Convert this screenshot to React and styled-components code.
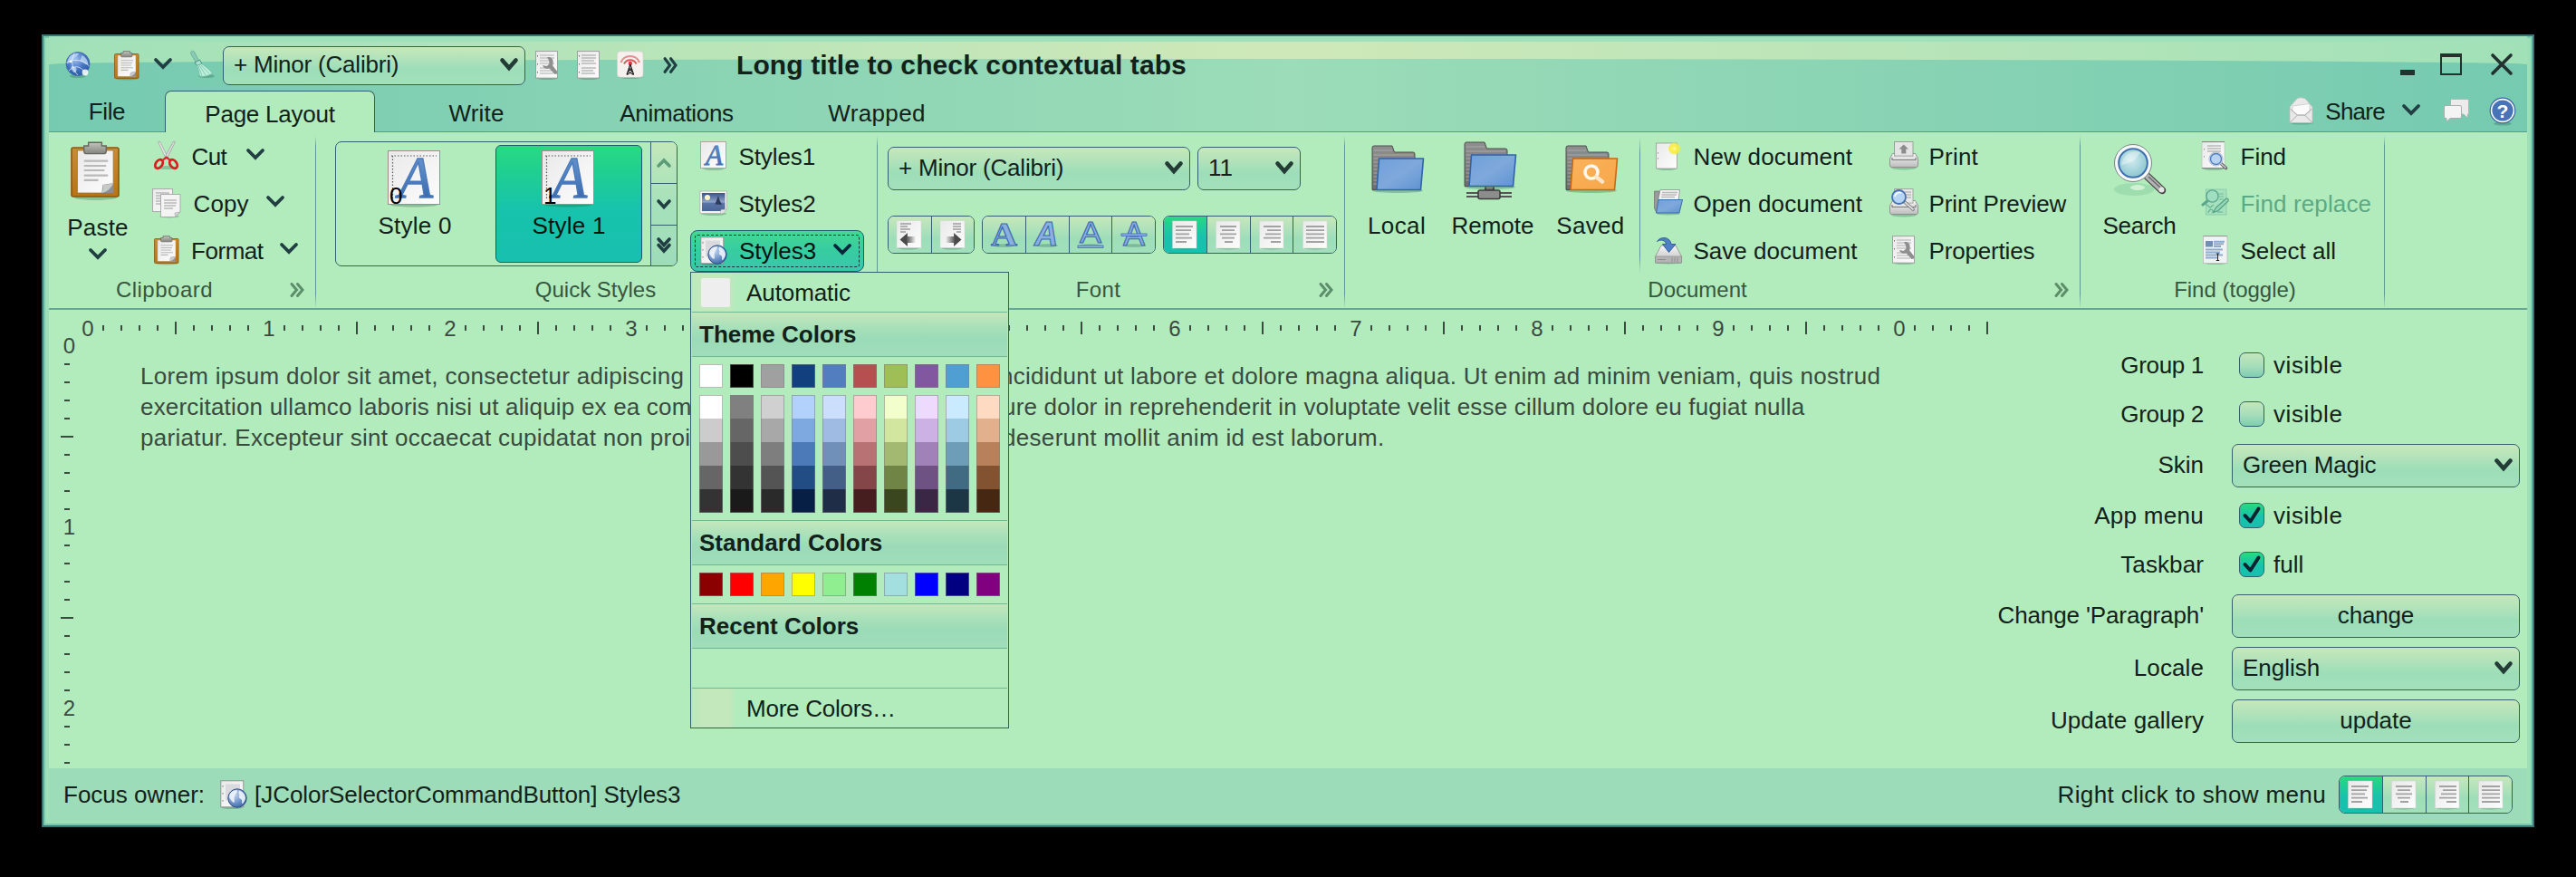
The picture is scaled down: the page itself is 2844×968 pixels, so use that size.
import React from 'react';
import styled, { createGlobalStyle, css } from 'styled-components';

const ink = '#12211a';
const edge = '#35606a';
const glossy = css`background: linear-gradient(180deg, #c6e8bb 0%, #b4e3ba 28%, #9ddeb9 60%, #a1e0ba 100%);`;
const selected = css`background: linear-gradient(180deg, #29da82 0%, #20d08f 20%, #17c3ac 55%, #17c0af 100%);`;

const GlobalStyle = createGlobalStyle`
  * { box-sizing: border-box; }
  body { margin: 0; background: #000; font-family: "Liberation Sans", Arial, sans-serif; font-size: 26px; line-height: 30px; color: ${ink}; }
  svg { display: block; flex: none; overflow: visible; }
`;

const Desktop = styled.div`
  width: 2844px;
  height: 968px;
  padding: 38px 46px 55px;
  background: #000;
`;
const Window = styled.div`
  display: flex;
  flex-direction: column;
  height: 875px;
  padding: 0 6px;
  border: 2px solid #3e7576;
  background: #9fdfb8;
  box-shadow: inset 0 0 0 2px #79c9b0;
`;

/* ---------- text ---------- */
const Text = styled.span`
  white-space: pre;
  letter-spacing: ${(p) => p.$ls || 0}px;
  ${(p) => p.$disabled && 'color: #5ea984;'}
`;
const Title = styled.h1`
  margin: 0 0 0 65px;
  font-size: 30px;
  line-height: 34px;
  font-weight: bold;
  letter-spacing: 0.1px;
  white-space: nowrap;
`;

/* ---------- header ---------- */
const Header = styled.header`
  position: relative;
  z-index: 0;
  height: 106px;
  border-bottom: 1px solid #569b92;
  background: linear-gradient(90deg, #a1e1b8, #cfe8b9 50%, #a1e1b8);
  box-shadow: inset 0 6px 0 #a0e0ba, inset 0 2px 0 #79c9b0;
  &::before {
    content: '';
    position: absolute;
    z-index: -1;
    inset: 25px 0 0;
    border-radius: 50% 50% 0 0 / 6px 6px 0 0;
    background: linear-gradient(90deg, #75cab0, #9cdcb8 50%, #75cab0);
  }
`;
const TitleBar = styled.div`
  display: flex;
  align-items: center;
  height: 60px;
  padding: 4px 16px 0;
`;
const WindowButtons = styled.div`
  display: flex;
  align-items: flex-end;
  margin: 0 0 3px auto;
`;
const TabRow = styled.div`
  display: flex;
  height: 46px;
`;
const Tab = styled.div`
  display: flex;
  align-items: center;
  justify-content: center;
  width: ${(p) => p.$w}px;
  height: ${(p) => (p.$active ? 46 : 45)}px;
  padding-top: ${(p) => (p.$file ? 0 : 4)}px;
  ${(p) =>
    p.$active &&
    css`
      border: 1px solid ${edge};
      border-bottom: 0;
      border-radius: 7px 7px 0 0;
      background: #b2ecbd;
    `}
`;
const Anchored = styled.div`
  display: flex;
  align-items: center;
  margin-left: auto;
  padding-right: 11px;
  height: 45px;
`;

/* ---------- shared controls ---------- */
const Gap = styled.span`
  flex: none;
  width: ${(p) => p.$w}px;
`;
const Combo = styled.div`
  display: flex;
  align-items: center;
  justify-content: space-between;
  width: ${(p) => p.$w}px;
  height: ${(p) => p.$h || 48}px;
  padding: 0 7px 2px 11px;
  border: 1px solid ${edge};
  border-radius: 7px;
  ${glossy}
`;
const PushButton = styled(Combo)`
  justify-content: center;
  padding: 0 0 2px;
`;
const Strip = styled.div`
  display: flex;
  width: ${(p) => p.$w || 192}px;
  height: 42px;
  border: 1px solid ${edge};
  border-radius: 7px;
  overflow: hidden;
`;
const StripButton = styled.div`
  display: flex;
  align-items: center;
  justify-content: center;
  flex: 1 1 0;
  ${glossy}
  ${(p) => p.$on && selected}
  & + & { border-left: 1px solid ${edge}; }
`;

/* ---------- ribbon ---------- */
const Ribbon = styled.div`
  display: flex;
  height: 196px;
  border-bottom: 2px solid #64a893;
  background: #b2ecbd;
`;
const Band = styled.section`
  display: flex;
  flex-direction: column;
  width: ${(p) => p.$w}px;
  padding-right: 1px;
  background: linear-gradient(180deg, transparent 2%, #5b9a95 8%, #5b9a95 92%, transparent 100%) right / 1px 100% no-repeat;
`;
const BandBody = styled.div`
  display: flex;
  height: 156px;
`;
const BandFooter = styled.footer`
  display: flex;
  align-items: center;
  height: 36px;
  font-size: 24px;
  color: #36573f;
`;
const BandTitle = styled.div`
  flex: 1;
  text-align: center;
  padding-right: ${(p) => Math.max(p.$nudge || 0, 0)}px;
  padding-left: ${(p) => Math.max(-(p.$nudge || 0), 0)}px;
`;
const Expander = styled.div`
  width: 28px;
`;
const Column = styled.div`
  display: flex;
  flex-direction: column;
  width: ${(p) => p.$w}px;
  padding-left: ${(p) => p.$pl || 0}px;
`;
const Command = styled.div`
  display: flex;
  align-items: center;
  height: 52px;
`;
const CommandText = styled(Text)`
  padding-top: 1px;
`;
const BigButton = styled.div`
  display: flex;
  flex-direction: column;
  align-items: center;
  width: ${(p) => p.$w}px;
  padding-top: 10px;
`;
const BigIcon = styled.div`
  height: 64px;
  margin-left: ${(p) => p.$dx || 0}px;
  margin-bottom: ${(p) => (p.$tall ? 16 : 14)}px;
  padding-top: ${(p) => p.$top || 0}px;
`;
const PasteArrow = styled.div`
  margin-top: 8px;
`;
const VLine = styled.div`
  width: 1px;
  height: 150px;
  margin-top: 5px;
  background: linear-gradient(180deg, transparent, #5b9a95 12%, #5b9a95 88%, transparent);
`;
const Gallery = styled.div`
  display: flex;
  width: 378px;
  height: 138px;
  margin: 10px 14px 0 21px;
  border: 1px solid ${edge};
  border-radius: 7px;
  overflow: hidden;
`;
const GalleryCells = styled.div`
  display: flex;
  gap: 8px;
  flex: 1;
  padding: 3px 8px 3px 6px;
`;
const GalleryCell = styled.div`
  display: flex;
  flex-direction: column;
  align-items: center;
  width: 162px;
  height: 130px;
  padding-top: 5px;
  border: 1px solid ${(p) => (p.$on ? '#1a5a6a' : 'transparent')};
  border-radius: 6px;
  color: ${(p) => (p.$on ? '#04130f' : ink)};
  ${(p) => p.$on && selected}
`;
const GalleryIcon = styled.div`
  margin: 0 0 7px -2px;
`;
const GalleryScroll = styled.div`
  display: grid;
  grid-template-rows: 45px 46px 45px;
  width: 29px;
  border-left: 1px solid ${edge};
  background: linear-gradient(180deg, #c2e8bb, #a6e1ba 50%, #9ddcb9);
`;
const ScrollButton = styled.div`
  display: grid;
  place-items: center;
  & + & { border-top: 1px solid ${edge}; }
`;
const SelectorWrap = styled.div`
  position: relative;
  width: 192px;
  margin: 4px 0 0 -10px;
`;
const SelectorButton = styled.div`
  display: flex;
  align-items: center;
  height: 46px;
  padding: 0 0 0 9px;
  border: 1px solid #1c5c6c;
  border-radius: 8px;
  outline: 1px dashed #0b3336;
  outline-offset: -6px;
  color: #04130f;
  background: linear-gradient(180deg, #45d892, #37cda0 45%, #38c8ac);
`;
const FontTools = styled.div`
  display: flex;
  flex-direction: column;
  gap: 28px;
  height: 156px;
  padding: 16px 0 0 11px;
`;
const ToolLine = styled.div`
  display: flex;
  gap: 8px;
`;

/* ---------- colour popup ---------- */
const Popup = styled.div`
  position: absolute;
  z-index: 5;
  top: 46px;
  left: 0;
  width: 352px;
  padding: 0 1px;
  border: 1px solid ${edge};
  background: #b2ecbd;
`;
const PopupItem = styled.div`
  display: flex;
  align-items: center;
  height: 43px;
`;
const Gutter = styled.div`
  display: grid;
  place-items: center;
  width: 48px;
  height: 100%;
  margin-right: 12px;
  background: linear-gradient(90deg, #b9eabc, #c3e8bc 25%, #c3e8bc 85%, #b4ebbd);
`;
const AutoSwatch = styled.div`
  width: 32px;
  height: 32px;
  margin-left: 4px;
  border-radius: 2px;
  background: #eeeeee;
`;
const PopupHeader = styled.div`
  height: 50px;
  padding: 9px 8px 0;
  border: solid #6fb795;
  border-width: 1px 0;
  font-weight: bold;
  background: linear-gradient(180deg, #c5e7bb, #a7e0b9 35%, #9bdbb7 60%, #9fdeb9);
`;
const Swatches = styled.div`
  display: flex;
  gap: 8px;
  padding: 8px 8px ${(p) => (p.$open ? 0 : 8)}px;
`;
const SwatchStack = styled.div`
  display: flex;
  flex-direction: column;
  width: 26px;
`;
const Swatch = styled.div`
  height: 26px;
  background: ${(p) => p.$c};
  border: solid rgba(128, 128, 128, 0.55);
  border-width: ${(p) => (p.$first ? 1 : 0)}px 1px ${(p) => (p.$last ? 1 : 0)}px;
`;
const EmptyRow = styled.div`
  height: 44px;
  border-bottom: 1px solid #6fb795;
`;

/* ---------- document ---------- */
const Main = styled.main`
  display: flex;
  justify-content: space-between;
  height: 506px;
  background: #b2ecbd;
  overflow: hidden;
`;
const Editor = styled.div`
  width: 2160px;
  padding: 10px 0 0 10px;
  color: #3a4a3f;
`;
const HRuler = styled.div`
  display: flex;
  height: 20px;
  margin-left: 20px;
  font-size: 24px;
`;
const VRuler = styled.div`
  display: flex;
  flex-direction: column;
  width: 20px;
  font-size: 24px;
`;
const RulerCell = styled.div`
  display: flex;
  flex: none;
  align-items: center;
  justify-content: center;
  width: 20px;
  height: 20px;
`;
const Digit = styled.span`
  margin: ${(p) => (p.$v ? '-1px 0 0 5px' : '2px 0 0 6px')};
  line-height: 20px;
`;
const Tick = styled.span`
  width: ${(p) => (p.$v ? (p.$long ? 14 : 6) : 2)}px;
  height: ${(p) => (p.$v ? 2 : p.$long ? 14 : 6)}px;
  background: #3a4a3f;
`;
const Page = styled.div`
  display: flex;
`;
const Paragraph = styled.div`
  display: flex;
  flex-direction: column;
  margin: 26px 0 0 71px;
  line-height: 34px;
`;
const Form = styled.div`
  display: grid;
  grid-template-columns: auto 318px;
  grid-template-rows: 44px 44px 48px 44px 44px 48px 48px 48px;
  row-gap: 10px;
  column-gap: 31px;
  align-content: start;
  align-items: center;
  justify-items: end;
  padding: 40px 8px 0 0;
`;
const FormLabel = styled(Text)`
  padding-bottom: 2px;
`;
const CheckRow = styled.div`
  display: flex;
  align-items: center;
  justify-self: start;
  gap: 10px;
  margin: 0 0 3px 8px;
`;
const CheckBox = styled.div`
  display: grid;
  place-items: center;
  width: 28px;
  height: 28px;
  border: 1px solid ${edge};
  border-radius: 7px;
  background: linear-gradient(180deg, #c3e7bb, #a5ddba 55%, #7ecdb2);
  ${(p) => p.$on && selected}
`;
const StatusBar = styled.footer`
  display: flex;
  align-items: center;
  height: 58px;
  padding: 0 16px;
  background: #9ddcb8;
`;
const Spacer = styled.div`
  flex: 1;
`;

/* ---------- glyphs ---------- */
const ChevronBox = styled.span`
  padding-bottom: ${(p) => p.$lift}px;
`;
const Chevron = ({ color = '#213f42', lift = 4 }) => (
  <ChevronBox $lift={lift}>
    <svg width="20" height="12" viewBox="0 0 20 12">
      <path d="M2 2 L10 10 L18 2" fill="none" stroke={color} strokeWidth="3.8" strokeLinecap="round" />
    </svg>
  </ChevronBox>
);
const ComboArrow = () => (
  <svg width="20" height="14" viewBox="0 0 20 14">
    <path d="M2.500 2.500 L10 11 L17.500 2.500" fill="none" stroke="#243c36" strokeWidth="4.600" strokeLinecap="round" />
  </svg>
);
const SmallArrow = ({ up, double, color = '#213f42' }) => (
  <svg width="16" height={double ? 18 : 11} viewBox={double ? '0 0 16 18' : '0 0 16 11'}>
    <g fill="none" stroke={color} strokeWidth="3.600" strokeLinecap="round">
      {up ? <path d="M2 9 L8 3 L14 9" /> : <path d="M2 2 L8 8.500 L14 2" />}
      {double && <path d="M2 8.500 L8 15 L14 8.500" />}
    </g>
  </svg>
);
const Guillemet = ({ color = '#5d8d69', h = 16 }) => (
  <svg width="16" height={h} viewBox="0 0 16 16" preserveAspectRatio="none">
    <path d="M2 1.500 L7.500 8 L2 14.500 M8.500 1.500 L14 8 L8.500 14.500" fill="none" stroke={color} strokeWidth="3" strokeLinecap="round" />
  </svg>
);
const CheckMark = () => (
  <svg width="20" height="20" viewBox="0 0 20 20">
    <path d="M2.500 10 L8.500 16.500 L17.500 2.500" fill="none" stroke="#08212f" strokeWidth="4" strokeLinecap="round" strokeLinejoin="round" />
  </svg>
);

/* ---------- icons ---------- */
const Defs = () => (
  <svg width="0" height="0" aria-hidden="true">
    <defs>
      <linearGradient id="paper" x1="0" y1="0" x2="1" y2="1"><stop offset="0" stopColor="#e9e9e9" /><stop offset="1" stopColor="#fdfdfd" /></linearGradient>
      <linearGradient id="metal" x1="0" y1="0" x2="0" y2="1"><stop offset="0" stopColor="#c4c4be" /><stop offset="1" stopColor="#85857f" /></linearGradient>
      <linearGradient id="wood" x1="0" y1="0" x2="0" y2="1"><stop offset="0" stopColor="#c88c36" /><stop offset="1" stopColor="#b87414" /></linearGradient>
      <linearGradient id="blue" x1="0" y1="0" x2="1" y2="1"><stop offset="0" stopColor="#6f9fd8" /><stop offset="0.5" stopColor="#7fa9dc" /><stop offset="1" stopColor="#5f92d0" /></linearGradient>
      <linearGradient id="orange" x1="0" y1="0" x2="1" y2="1"><stop offset="0" stopColor="#fbb35c" /><stop offset="1" stopColor="#f6a648" /></linearGradient>
      <linearGradient id="grey" x1="0" y1="0" x2="0" y2="1"><stop offset="0" stopColor="#8f8f8f" /><stop offset="1" stopColor="#6d6d6d" /></linearGradient>
      <linearGradient id="letter" x1="0" y1="0" x2="0" y2="1"><stop offset="0" stopColor="#6f9fd6" /><stop offset="1" stopColor="#2f5fa6" /></linearGradient>
      <linearGradient id="sky" x1="0" y1="0" x2="0" y2="1"><stop offset="0" stopColor="#3d5288" /><stop offset="0.5" stopColor="#8fa5c8" /><stop offset="0.56" stopColor="#5a76a8" /><stop offset="1" stopColor="#4a6596" /></linearGradient>
      <linearGradient id="body" x1="0" y1="0" x2="0" y2="1"><stop offset="0" stopColor="#f6f6f6" /><stop offset="1" stopColor="#bdbdbd" /></linearGradient>
      <linearGradient id="fade" x1="0" y1="0" x2="1" y2="0"><stop offset="0.400" stopColor="#4a4a4a" /><stop offset="1" stopColor="#4a4a4a" stopOpacity="0" /></linearGradient>
      <linearGradient id="fadeBack" x1="1" y1="0" x2="0" y2="0"><stop offset="0.400" stopColor="#4a4a4a" /><stop offset="1" stopColor="#4a4a4a" stopOpacity="0" /></linearGradient>
      <radialGradient id="globe" cx="0.4" cy="0.3" r="0.75"><stop offset="0" stopColor="#9fc0ee" /><stop offset="0.55" stopColor="#4675c2" /><stop offset="1" stopColor="#2a55a0" /></radialGradient>
      <radialGradient id="earth" cx="0.35" cy="0.3" r="0.8"><stop offset="0" stopColor="#c3d6f0" /><stop offset="0.6" stopColor="#6a90c6" /><stop offset="1" stopColor="#345f9f" /></radialGradient>
      <radialGradient id="lens" cx="0.45" cy="0.4" r="0.65"><stop offset="0" stopColor="#d3ecef" /><stop offset="1" stopColor="#85c3cd" /></radialGradient>
      <radialGradient id="sun" cx="0.5" cy="0.5" r="0.5"><stop offset="0" stopColor="#fffbb0" /><stop offset="0.4" stopColor="#fbf04a" /><stop offset="1" stopColor="#f6ea3c" stopOpacity="0.75" /></radialGradient>
    </defs>
  </svg>
);
const Icon = ({ s = 32, children, ...rest }) => (
  <svg width={s} height={s} viewBox="0 0 32 32" {...rest}>{children}</svg>
);
const Lines = ({ d, color = '#b9b9b9', w = 1.4 }) => <path d={d} stroke={color} strokeWidth={w} fill="none" />;
const Shadow = ({ cx = 16, cy = 30, rx = 12, ry = 2 }) => <ellipse cx={cx} cy={cy} rx={rx} ry={ry} fill="#1e5a3c" opacity="0.28" />;

const GlobeIcon = () => (
  <Icon>
    <Shadow cy={28} rx={9} />
    <circle cx="16" cy="14.500" r="13" fill="url(#globe)" stroke="#3c66ad" strokeWidth="0.800" />
    <path d="M6 8 C9 3 14 3 17 3 C15 7 12 7 11 10 C9 13 6 12 4.500 15 C4 12 5 10 6 8Z M20 5 C25 7 27 11 27.500 15 C25 17 22 12 19 12 C17 10 21 8 20 5Z M9 17 C13 17 16 19 14 23 C13 25 11 24 10 22 C8 20 8 19 9 17Z" fill="#c6dcf7" opacity="0.750" />
    <path d="M3.500 13 C10 9 21 9 28.500 17 M6 22 C12 16 18 16 24 24 M12 2.500 C8 10 9 20 16 27" fill="none" stroke="#e4effc" strokeWidth="0.900" opacity="0.850" />
    <circle cx="24" cy="24" r="3.400" fill="#fff" opacity="0.850" />
    <circle cx="8" cy="12" r="1.300" fill="#fff" />
  </Icon>
);
const ClipboardShape = () => (
  <>
    <Shadow cy={31} rx={12} ry={1.5} />
    <rect x="2.500" y="3.500" width="26.500" height="27" rx="1" fill="url(#wood)" stroke="#8a5510" strokeWidth="0.800" />
    <path d="M5.800 5 H26 V28.500 H5.800Z" fill="url(#paper)" stroke="#9a7333" strokeWidth="0.400" />
    <path d="M26 23 L20 24 L19.500 28.500 H26Z" fill="#8e8e8e" />
    <path d="M26 23 C24 24 21 23.500 20 24 C20.500 25.500 20 27.500 19.500 28.500 C22 28 25 26 26 23Z" fill="#c9c9c9" />
    <path d="M9.500 5.300 V2.500 H12 V0.600 H19.500 V2.500 H22 V5.300 Q22 6.800 21 6.800 H10.500 Q9.500 6.800 9.500 5.300Z" fill="url(#metal)" stroke="#66665f" strokeWidth="0.700" />
    <Lines d="M9.500 10.800 H23 M9.500 13.500 H22 M9.500 16 H21 M9.500 18.800 H23 M9.500 21.400 H17.500" w={1.1} />
  </>
);
const ClipboardIcon = () => <Icon><ClipboardShape /></Icon>;
const PasteIcon = () => (
  <svg width="54" height="64" viewBox="2 0 27.500 32" preserveAspectRatio="none"><ClipboardShape /></svg>
);
const BroomIcon = () => (
  <Icon>
    <Shadow cx={22} cy={28} rx={9} />
    <path d="M4.500 1.500 C6 -0.500 8 0 9 2 L14 12 L10.500 13.500 L5 4Z" fill="#8cc9b4" stroke="#5fae98" strokeWidth="0.800" />
    <path d="M9 13 L14.500 10 L17 14.500 L11.500 16.500Z" fill="#a9e0cc" stroke="#47937f" strokeWidth="1" />
    <path d="M11.500 16.500 L17 14.500 C21 18 26 21 28.500 25 C24 28 18 29 14.500 28 C13.500 24 13 20 11.500 16.500Z" fill="#bfeeda" stroke="#6cbba3" strokeWidth="0.800" />
    <Lines d="M13 17 L17 27.500 M14.500 16.500 L21 27 M16 16 L25 25.500" color="#7fcbb4" w={1} />
  </Icon>
);
const Sheet = () => (
  <rect x="3.500" y="0.600" width="24" height="29.500" fill="url(#paper)" stroke="#9a9a9a" strokeWidth="0.900" />
);
const DocIcon = () => (
  <Icon>
    <Shadow /><Sheet />
    <Lines d="M8 5 H24 M8 8 H24 M8 11 H22 M8 14 H24 M8 19 H24 M8 22 H21 M8 25 H23" />
    <Lines d="M5.500 5 V6.500 M5.500 14 V15.500 M5.500 23 V24.500" color="#777" w={1} />
  </Icon>
);
const WrenchDocIcon = () => (
  <Icon>
    <Shadow /><Sheet />
    <Lines d="M8 5 H24 M8 8 H24 M8 11 H22 M8 14 H24 M8 19 H24 M8 22 H21 M8 25 H23" color="#c6c6c6" />
    <Lines d="M5.500 5 V6.500 M5.500 14 V15.500 M5.500 23 V24.500" color="#777" w={1} />
    <path d="M16 7.500 C19.500 6 23.500 9 22.500 13.500 C22.500 15 22 16 22.500 17 L27 22.500 V25.500 L24.500 26 L18.500 19.500 C15.500 20.500 12 19.500 11 16 L15.500 17 L18.500 14.500 L18 10.500Z" fill="#8f8f8f" />
  </Icon>
);
const AntennaIcon = () => (
  <Icon>
    <Shadow cy={29} rx={13} />
    <rect x="1.500" y="0.800" width="28.500" height="28.500" rx="3.500" fill="#f6f1ef" stroke="#d8d0cc" strokeWidth="0.600" />
    <path d="M5.500 13 A11 11 0 0 1 26 13" fill="none" stroke="#e38f8f" strokeWidth="2.200" />
    <path d="M9 14.500 A7.500 7.500 0 0 1 22.500 14.500" fill="none" stroke="#dd5a5a" strokeWidth="2" />
    <circle cx="15.800" cy="14" r="2.200" fill="#d93c3c" />
    <path d="M15.800 15 L12 26.500 M15.800 15 L19.600 26.500 M14.400 19.500 L18.500 22.500 M17.200 19.500 L13 22.500 M13.500 23 L19.500 26.500 M18 23 L12 26.500" stroke="#1b1b1b" strokeWidth="1.200" fill="none" />
  </Icon>
);
const ScissorsIcon = () => (
  <Icon>
    <Shadow cx={16} cy={29} rx={11} />
    <path d="M6.500 0.500 L8.500 0 L18.500 20 L15.500 19.500Z" fill="#ececec" stroke="#9f9f9f" strokeWidth="0.800" />
    <path d="M25.500 0.500 L23.500 0 L12.500 20 L16 19.500Z" fill="#dcdcdc" stroke="#9f9f9f" strokeWidth="0.800" />
    <ellipse cx="7.500" cy="25" rx="3.600" ry="5.300" transform="rotate(35 7.500 25)" fill="none" stroke="#d61f1f" strokeWidth="2.800" />
    <ellipse cx="23.500" cy="25" rx="3.600" ry="5.300" transform="rotate(-35 23.500 25)" fill="none" stroke="#d61f1f" strokeWidth="2.800" />
    <path d="M12 20.500 L15.700 17.500 L19.500 20.500" stroke="#d61f1f" strokeWidth="2" fill="none" />
  </Icon>
);
const CopyIcon = () => (
  <Icon>
    <Shadow cx={19} cy={31} rx={11} ry={1.5} />
    <rect x="0.500" y="0.500" width="22" height="25" fill="url(#paper)" stroke="#a5a5a5" strokeWidth="0.900" />
    <Lines d="M4 5 H19 M4 8 H19 M4 11 H19 M4 14 H19 M4 17 H19" />
    <path d="M9.500 6.500 H31 V26 L25.500 31.500 H9.500Z" fill="#f4f4f4" stroke="#a5a5a5" strokeWidth="0.900" />
    <path d="M31 26 L25 27 L25.500 31.500Z" fill="#d5d5d5" stroke="#a0a0a0" strokeWidth="0.600" />
    <Lines d="M13 13 H27 M13 16 H27 M13 19 H26 M13 22 H23" />
  </Icon>
);
const ABig = ({ digit }) => (
  <svg width="58" height="61" viewBox="0 0 58 61">
    <ellipse cx="29" cy="60" rx="26" ry="2.500" fill="#1e5a3c" opacity="0.300" />
    <rect x="0.500" y="0.500" width="57" height="59" fill="url(#paper)" stroke="#9b8f8f" />
    <path d="M4 6 H54 M5.500 6 V54" stroke="#555" strokeWidth="1.200" strokeDasharray="1.500 2" fill="none" />
    <text x="12" y="52" fontFamily="Liberation Serif, serif" fontStyle="italic" fontSize="65" fill="url(#letter)" stroke="#4a7abb" strokeWidth="1.400" textLength="38" lengthAdjust="spacingAndGlyphs">A</text>
    <text x="2" y="59" fontFamily="Liberation Sans, sans-serif" fontSize="26" fill="#000">{digit}</text>
  </svg>
);
const ASmall = () => (
  <Icon>
    <Shadow /><rect x="1.500" y="0.500" width="28" height="29" fill="url(#paper)" stroke="#a89f9f" strokeWidth="0.900" />
    <text x="7" y="26" fontFamily="Liberation Serif, serif" fontStyle="italic" fontSize="32" fill="url(#letter)" stroke="#4a7abb" strokeWidth="0.800" textLength="19" lengthAdjust="spacingAndGlyphs">A</text>
  </Icon>
);
const PictureIcon = () => (
  <Icon>
    <Shadow cy={28} rx={14} />
    <path d="M0.800 3 H30.500 V23 L26 27.500 H0.800Z" fill="#f4f4f4" stroke="#a9a9a9" strokeWidth="0.700" />
    <rect x="3" y="5" width="25.500" height="20" fill="url(#sky)" />
    <circle cx="9" cy="10" r="3" fill="#fdf6c8" />
    <path d="M21 8 L17.500 17.500 L25 18 L22.500 13Z" fill="#2c3a5c" />
    <path d="M30.500 23 L24 23.500 L23.500 27.500 H26Z" fill="#e8e8e8" stroke="#aaa" strokeWidth="0.500" />
  </Icon>
);
const WebDocIcon = () => (
  <Icon>
    <Shadow cx={14} /><rect x="1.800" y="0.800" width="25" height="29" fill="url(#paper)" stroke="#8c8c8c" strokeWidth="0.900" />
    <rect x="7" y="4.500" width="16" height="18" fill="#d3d3da" opacity="0.800" />
    <Lines d="M4 6 V7.500 M4 14 V15.500 M4 22 V23.500" color="#777" w={1} />
    <circle cx="20" cy="20" r="10.200" fill="url(#earth)" stroke="#2d4b86" strokeWidth="1" />
    <path d="M12.500 14.500 C14.500 11.500 18 10.800 20 11.500 C20.500 14 17.500 15 17 18 C16 20.500 17.500 22 16.500 25 C13.500 24 12.500 21 11 19 C11 17 11.500 15.500 12.500 14.500Z M22 11.500 C26 12.500 29 16 29 20 C28.500 23 27 25 25.500 26.500 C24.500 24.500 26 22.500 24 21 C22 20 21 18.500 22.500 17 C21.500 15 21 13 22 11.500Z" fill="#eef4fb" opacity="0.900" />
  </Icon>
);
const FolderBack = () => (
  <>
    <ellipse cx="29" cy="50.500" rx="28" ry="2.500" fill="#1e5a3c" opacity="0.300" />
    <path d="M1 49.500 V3 Q1 1 3 1 H23 L25.500 8 H46 Q48 8 48 10 V49.500Z" fill="url(#grey)" stroke="#4e4e4e" />
    <Lines d="M2.500 6 H23 M2.500 11 H46 M2.500 15 H8 M2.500 19 H8 M2.500 23 H7 M2.500 27 H7 M2.500 31 H7 M2.500 35 H6.500 M2.500 39 H6.500 M2.500 43 H6" color="#a9a9a9" w={1} />
  </>
);
const folderFront = 'M8.500 15 H57.500 L54.500 49.500 H6Z';
const FolderIcon = () => (
  <svg width="58" height="52" viewBox="0 0 58 52">
    <FolderBack />
    <path d={folderFront} fill="url(#blue)" stroke="#2f64a8" strokeWidth="1.600" strokeLinejoin="round" />
  </svg>
);
const SavedIcon = () => (
  <svg width="58" height="52" viewBox="0 0 58 52">
    <FolderBack />
    <path d={folderFront} fill="url(#orange)" stroke="#c8670f" strokeWidth="1.600" strokeLinejoin="round" />
    <circle cx="29" cy="30" r="7" fill="none" stroke="#fff8ee" strokeWidth="3.600" />
    <path d="M34.500 35.500 L41 40.500" stroke="#fde6c8" strokeWidth="4.500" strokeLinecap="round" />
  </svg>
);
const RemoteIcon = () => (
  <svg width="58" height="64" viewBox="0 0 58 64">
    <FolderBack />
    <path d={folderFront} fill="url(#blue)" stroke="#2f64a8" strokeWidth="1.600" strokeLinejoin="round" />
    <path d="M24 50.500 V54 H33 V50.500" stroke="#444" strokeWidth="2" fill="#777" />
    <path d="M3 57 H53 M3 61 H53" stroke="#555" strokeWidth="2" />
    <rect x="16" y="54" width="24" height="9.500" rx="2" fill="#8d8d8d" stroke="#3d3d3d" strokeWidth="1.600" />
  </svg>
);
const NewDocIcon = () => (
  <Icon>
    <Shadow cx={14} rx={11} />
    <rect x="2.500" y="2" width="23" height="28" fill="url(#paper)" stroke="#9a9a9a" strokeWidth="0.800" />
    <Lines d="M4.500 12 V13.500 M4.500 18 V19.500" color="#999" w={1} />
    <circle cx="22.500" cy="8" r="6.500" fill="url(#sun)" />
  </Icon>
);
const OpenDocIcon = () => (
  <Icon>
    <Shadow cy={28} rx={13} ry={1.5} />
    <path d="M0.500 3 H6 V27 H3 L0.500 22Z" fill="#9a9a9a" stroke="#6d6d6d" strokeWidth="0.700" />
    <path d="M7 1.500 H28.500 L27 14 H4.500Z" fill="#f6f6f6" stroke="#8c8c8c" strokeWidth="0.800" />
    <Lines d="M9 4.500 H26 M8.500 7 H25 M8 9.500 H23" />
    <path d="M5 12.500 H31.500 L28 27 H2.500Z" fill="url(#blue)" stroke="#2f64a8" strokeWidth="0.900" strokeLinejoin="round" />
  </Icon>
);
const SaveDocIcon = () => (
  <Icon>
    <Shadow cy={30} rx={14} ry={1.5} />
    <path d="M8 11 H24 L30.500 23 V30 H1.500 V23Z" fill="url(#body)" stroke="#8c8c8c" strokeWidth="0.800" />
    <path d="M1.500 23 H30.500 V30 H1.500Z" fill="#b4b4b4" stroke="#8c8c8c" strokeWidth="0.700" />
    <Lines d="M4 26.500 H13 M20 24.500 V29 M23 24.500 V29 M26 24.500 V29" color="#888" w={0.9} />
    <path d="M3.500 6.500 C7 0.500 18 1 19 9.500 H24 L16.500 18.500 L9.500 9.500 H13.500 C13 5.500 8 3.500 3.500 6.500Z" fill="#4f7fc4" stroke="#2c5797" strokeWidth="0.900" />
  </Icon>
);
const PrinterBody = () => (
  <>
    <Shadow cy={29} rx={14} ry={2.5} />
    <path d="M3.500 13.500 H28.500 L31.500 19 V26.500 Q31.500 28.500 29.500 28.500 H2.500 Q0.500 28.500 0.500 26.500 V19Z" fill="url(#body)" stroke="#8a8a8a" strokeWidth="0.900" />
    <path d="M3 18 V20.500 H29 V18" stroke="#7c7c7c" strokeWidth="1.200" fill="none" />
  </>
);
const PrinterIcon = () => (
  <Icon>
    <PrinterBody />
    <rect x="5.500" y="0.600" width="20.500" height="15.500" fill="#e4e4e4" stroke="#8e8e8e" strokeWidth="0.800" />
    <path d="M15.800 3.500 L21 8.500 H18.300 V13.500 H13.300 V8.500 H10.500Z" fill="#8b8b8b" />
  </Icon>
);
const PreviewIcon = () => (
  <Icon>
    <PrinterBody />
    <rect x="5.500" y="0.600" width="20.500" height="15.500" fill="#e8e8e8" stroke="#999" strokeWidth="0.800" />
    <Lines d="M17 4 H24 M18 7 H24 M18 10 H24" />
    <path d="M17.500 15.500 L26 23" stroke="#777" strokeWidth="3.600" strokeLinecap="round" />
    <path d="M17.500 15.500 L26 23" stroke="#ddd" strokeWidth="1.800" strokeLinecap="round" />
    <circle cx="10.500" cy="9.500" r="7.500" fill="#b5d5f2" stroke="#4671b0" strokeWidth="1.800" />
    <path d="M6 9 A5 5 0 0 1 13 5" fill="none" stroke="#fff" strokeWidth="1.500" />
  </Icon>
);
const SearchIcon = () => (
  <svg width="64" height="64" viewBox="0 0 64 64">
    <ellipse cx="26" cy="53" rx="22" ry="7" fill="#3f9b6c" opacity="0.180" />
    <ellipse cx="30" cy="51" rx="8" ry="3" fill="#e6fbe4" opacity="0.700" />
    <path d="M40 38 L57 54" stroke="#454545" strokeWidth="8.500" strokeLinecap="round" />
    <path d="M40 38 L56 53" stroke="#b4b4b4" strokeWidth="6" />
    <path d="M42 39 L55 51" stroke="#6a6a6a" strokeWidth="1.500" />
    <circle cx="56.500" cy="53.500" r="3" fill="#e6e6e6" />
    <circle cx="25" cy="24" r="20.500" fill="#f6f9fa" stroke="#7d8486" strokeWidth="1" />
    <circle cx="25" cy="24" r="15.800" fill="url(#lens)" stroke="#3f6fae" strokeWidth="2" />
    <path d="M12 26 C14 14 24 9 33 12 C28 20 24 24 12 26Z" fill="#fff" opacity="0.350" />
  </svg>
);
const FindIcon = () => (
  <Icon>
    <Shadow cx={14} /><rect x="1" y="0.600" width="25" height="29" fill="url(#paper)" stroke="#c4bcbc" strokeWidth="0.700" />
    <path d="M1 0.600 H26 M1 29.600 H26" stroke="#777" strokeWidth="0.900" />
    <Lines d="M7 5 H22 M7 8 H22 M7 11 H22" />
    <Lines d="M3.500 8 V9.500 M3.500 16 V17.500" color="#999" w={1} />
    <path d="M21 23.500 L27.500 29.500" stroke="#666" strokeWidth="3.600" strokeLinecap="round" />
    <path d="M22 24.500 L27 29" stroke="#c9c9c9" strokeWidth="1.600" strokeLinecap="round" />
    <circle cx="16.500" cy="19.500" r="7.600" fill="#e8eef6" stroke="#9aa4b4" strokeWidth="0.700" />
    <circle cx="16.500" cy="19.500" r="6" fill="#b9d4f2" stroke="#4d7cc0" strokeWidth="1.400" />
  </Icon>
);
const ReplaceIcon = () => (
  <Icon opacity="0.85">
    <rect x="5.500" y="1" width="22.500" height="28" fill="#a4e0bf" stroke="#7cc3a2" strokeWidth="0.800" />
    <Lines d="M20 6 H25 M20 9 H25 M20 12 H25" color="#7cc3a2" />
    <path d="M7 14 L2 18" stroke="#4b9c83" strokeWidth="3" strokeLinecap="round" />
    <circle cx="12.500" cy="8.500" r="6.600" fill="#9ddcc4" stroke="#4b9c83" strokeWidth="1.400" />
    <path d="M5 17 L10 21 L14 18 M8 27 C10 21 14 23 13 27 M18 26 H24" fill="none" stroke="#5aa98b" strokeWidth="1.200" />
    <path d="M13.500 26.500 L16.500 21 L28 11 Q31 11 30 14 L19 24.500Z" fill="#8fd2b6" stroke="#3f8f74" strokeWidth="1.100" />
  </Icon>
);
const SelectAllIcon = () => (
  <Icon>
    <Shadow rx={13} /><rect x="2.500" y="0.600" width="26.500" height="30" fill="#f0f2f4" stroke="#b9b9b9" strokeWidth="0.800" />
    <path d="M2.500 0.600 H29" stroke="#8f8f8f" strokeWidth="0.900" />
    <rect x="5" y="6" width="8" height="6.500" fill="#6f8fb4" />
    <path d="M14 6.700 H26 M14 9.300 H25 M14 11.900 H22 M5 15.500 H24 M5 18.500 H21 M5 21.500 H24 M5 24.500 H18" stroke="#8eabcb" strokeWidth="2.100" />
    <path d="M18.500 20 V27.500 M16.800 20 H20.200 M16.800 27.500 H20.200" stroke="#222" strokeWidth="1" />
  </Icon>
);
const MailIcon = () => (
  <Icon>
    <Shadow cx={17} cy={28.5} rx={13} />
    <path d="M4 11 L12 1.800 Q16.500 -0.500 21 1.800 L29 11 V28.500 H4Z" fill="#e9e9e9" stroke="#b9bfbb" strokeWidth="0.800" />
    <path d="M7 10 L26 7.500 V17 L20.500 20 H12.500 L7 17Z" fill="#fbfbfb" stroke="#bdbdbd" strokeWidth="0.600" />
    <path d="M4.500 13 L12.500 20 H20.500 L28.500 13 M4.500 28 L12.500 20 M28.500 28 L20.500 20" fill="none" stroke="#a3a3a3" strokeWidth="0.900" />
  </Icon>
);
const ChatIcon = () => (
  <Icon>
    <path d="M10.500 2.500 H28 Q29.500 2.500 29.500 4 V17.500 Q29.500 19 28.500 19 L28 23 L24 19 H10.500 Q9.500 19 9.500 18 V4 Q9.500 2.500 10.500 2.500Z" fill="#ececec" stroke="#a7b5ae" strokeWidth="0.900" />
    <path d="M4 9.500 H20 Q21.500 9.500 21.500 11 V22 Q21.500 23.500 20 23.500 H9 L5 27.500 V23.500 H4 Q2.500 23.500 2.500 22 V11 Q2.500 9.500 4 9.500Z" fill="#f4f4f4" stroke="#a7a7a7" strokeWidth="0.900" />
  </Icon>
);
const HelpIcon = () => (
  <Icon>
    <Shadow cx={16} cy={29.5} rx={10} />
    <circle cx="16" cy="15" r="13.800" fill="#fff" stroke="#3d68a8" strokeWidth="1.200" />
    <circle cx="16" cy="15" r="11.600" fill="#4873b6" />
    <text x="16" y="22.500" textAnchor="middle" fontFamily="Liberation Sans, sans-serif" fontWeight="bold" fontSize="21" fill="#fff">?</text>
  </Icon>
);
const IndentIcon = ({ right }) => (
  <Icon>
    <Shadow cx={15} cy={30.5} /><rect x="2" y="0.500" width="27" height="30" fill="url(#paper)" stroke="#d2d2d2" strokeWidth="0.500" />
    <Lines d={right ? 'M16 4 H25 M16 7 H25 M16 10 H25 M20 13 H25' : 'M6 4 H18 M6 7 H14 M6 10 H17 M6 13 H12'} color="#9d9d9d" />
    {right ? (
      <path d="M8 18 H17 V14 L25.500 21.500 L17 29 V25 H8Z" fill="url(#fadeBack)" />
    ) : (
      <path d="M23 18 H14 V14 L5.500 21.500 L14 29 V25 H23Z" fill="url(#fade)" />
    )}
  </Icon>
);
const FontIcon = ({ italic, light, under, strike }) => (
  <Icon>
    <Shadow cx={16} cy={28} rx={12} ry={1.8} />
    <text x={italic ? 2 : under || strike ? 4 : 2} y={under ? 25 : 28} fontFamily={light || italic ? 'Liberation Sans, sans-serif' : 'Liberation Serif, serif'} fontWeight={light ? 'normal' : 'bold'} fontStyle={italic ? 'italic' : 'normal'} fontSize={under ? 33 : 36} fill="#8ab0e0" stroke="#3d68b0" strokeWidth={1.1} textLength={under || strike ? 24 : italic ? 26 : 29} lengthAdjust="spacingAndGlyphs">A</text>
    {under && <rect x="2" y="28" width="28" height="2.400" fill="#8fb4e4" stroke="#3d68b0" strokeWidth="0.800" />}
    {strike && <rect x="2" y="15" width="28" height="2.400" fill="#8fb4e4" stroke="#3d68b0" strokeWidth="0.800" />}
  </Icon>
);
const alignPaths = {
  left: 'M6 7 H25 M6 11.200 H23 M6 15.400 H21 M6 19.600 H24 M6 24 H18',
  center: 'M7 7 H25 M9 11.200 H23 M7 15.400 H25 M9 19.600 H23 M12 24 H21',
  right: 'M7 7 H26 M11 11.200 H26 M9 15.400 H26 M7 19.600 H26 M15 24 H26',
  fill: 'M6 7 H26 M6 11.200 H26 M6 15.400 H26 M6 19.600 H26 M6 24 H26',
};
const AlignIcon = ({ kind }) => (
  <Icon>
    <Shadow cx={16} cy={31} rx={12} ry={1.5} />
    <rect x="2.500" y="1" width="26.500" height="30" fill="url(#paper)" stroke="#d2d2d2" strokeWidth="0.500" />
    <Lines d={alignPaths[kind]} color="#a2a2a2" w={1.8} />
  </Icon>
);

/* ---------- composed parts ---------- */
const CommandItem = ({ icon, label, ls, gap = 11.5, arrow, disabled }) => (
  <Command>
    {icon}
    <Gap $w={gap} />
    <CommandText $ls={ls} $disabled={disabled}>{label}</CommandText>
    {arrow && <><Gap $w={arrow} /><Chevron /></>}
  </Command>
);
const FontCombo = ({ w, h, label, ls }) => (
  <Combo $w={w} $h={h}>
    <Text $ls={ls}>{label}</Text>
    <ComboArrow />
  </Combo>
);
const AlignStrip = () => (
  <Strip>
    {['left', 'center', 'right', 'fill'].map((k) => (
      <StripButton key={k} $on={k === 'left'}><AlignIcon kind={k} /></StripButton>
    ))}
  </Strip>
);
const Footer = ({ title, ls, nudge, expander }) => (
  <BandFooter>
    <BandTitle $nudge={nudge}><Text $ls={ls}>{title}</Text></BandTitle>
    {expander && <Expander><Guillemet /></Expander>}
  </BandFooter>
);

const themeColors = ['#ffffff', '#000000', '#a0a0a0', '#123f7e', '#527dbe', '#b54f50', '#9fbf56', '#8158a0', '#4f9fd2', '#fe9240'];
const themeShades = [
  ['#ffffff', '#cccccc', '#999999', '#666666', '#333333'],
  ['#808080', '#666666', '#4d4d4d', '#333333', '#1a1a1a'],
  ['#d0d0d0', '#a8a8a8', '#7e7e7e', '#545454', '#2a2a2a'],
  ['#b2d1fb', '#7ea9e0', '#4c79b7', '#224c84', '#071f45'],
  ['#cbdffd', '#9fbbe4', '#7190b9', '#445f87', '#1f2d46'],
  ['#fecbce', '#e1a0a3', '#b87274', '#844649', '#461e1f'],
  ['#f2fecb', '#d3e69f', '#a3b972', '#708445', '#3a461d'],
  ['#eddafc', '#ccb1e4', '#a082b9', '#6f5284', '#3a2746'],
  ['#caeafd', '#9dcbe3', '#6d9db7', '#416a83', '#1c3646'],
  ['#fedac3', '#e2b08c', '#b9815b', '#835230', '#462711'],
];
const standardColors = ['#8b0000', '#ff0000', '#ffa500', '#ffff00', '#90ee90', '#008000', '#a4dfdf', '#0000ff', '#000080', '#800080'];

const SwatchRow = ({ stacks, open }) => (
  <Swatches $open={open}>
    {stacks.map((col) => (
      <SwatchStack key={col.join()}>
        {col.map((c, i) => <Swatch key={c} $c={c} $first={i === 0} $last={i === col.length - 1} />)}
      </SwatchStack>
    ))}
  </Swatches>
);

const ColorPopup = () => (
  <Popup>
    <PopupItem>
      <Gutter><AutoSwatch /></Gutter>
      <Text $ls={-0.08}>Automatic</Text>
    </PopupItem>
    <PopupHeader>Theme Colors</PopupHeader>
    <SwatchRow stacks={themeColors.map((c) => [c])} open />
    <SwatchRow stacks={themeShades} />
    <PopupHeader>Standard Colors</PopupHeader>
    <SwatchRow stacks={standardColors.map((c) => [c])} />
    <PopupHeader>Recent Colors</PopupHeader>
    <EmptyRow />
    <PopupItem>
      <Gutter />
      <Text $ls={-0.24}>More Colors…</Text>
    </PopupItem>
  </Popup>
);

const rulerCells = (count, v) =>
  Array.from({ length: count }, (_, k) => (
    <RulerCell key={k}>
      {k % 10 === 0 ? <Digit $v={v}>{(k / 10) % 10}</Digit> : <Tick $v={v} $long={k % 5 === 0} />}
    </RulerCell>
  ));

const Check = ({ on, label, ls }) => (
  <CheckRow>
    <CheckBox $on={on}>{on && <CheckMark />}</CheckBox>
    <Text $ls={ls}>{label}</Text>
  </CheckRow>
);

export default function App() {
  return (
    <Desktop>
      <GlobalStyle />
      <Window>
        <Header>
          <TitleBar>
            <GlobeIcon /><Gap $w={22} />
            <ClipboardIcon /><Gap $w={14} />
            <Chevron /><Gap $w={16} />
            <BroomIcon /><Gap $w={8} />
            <FontCombo w={334} h={43} label="+ Minor (Calibri)" ls={-0.2} /><Gap $w={8} />
            <WrenchDocIcon /><Gap $w={14} />
            <DocIcon /><Gap $w={14} />
            <AntennaIcon /><Gap $w={20} />
            <Guillemet color="#213f42" h={18} />
            <Title>Long title to check contextual tabs</Title>
            <WindowButtons>
              <svg width="16" height="6"><rect width="16" height="6" fill="#22332f" /></svg>
              <Gap $w={28} />
              <svg width="24" height="24"><path d="M1 1 H23 V23 H1Z M1 3 H23" fill="none" stroke="#22332f" strokeWidth="2" /></svg>
              <Gap $w={32} />
              <svg width="24" height="24"><path d="M2 2 L22 22 M22 2 L2 22" stroke="#22332f" strokeWidth="3.600" strokeLinecap="round" /></svg>
            </WindowButtons>
          </TitleBar>
          <TabRow>
            <Tab $w={128} $file><Text $ls={-0.38}>File</Text></Tab>
            <Tab $w={232} $active><Text $ls={-0.25}>Page Layout</Text></Tab>
            <Tab $w={224}><Text $ls={0.19}>Write</Text></Tab>
            <Tab $w={218}><Text $ls={-0.32}>Animations</Text></Tab>
            <Tab $w={224}><Text $ls={0.36}>Wrapped</Text></Tab>
            <Anchored>
              <MailIcon /><Gap $w={11} />
              <Text $ls={-0.73}>Share</Text><Gap $w={19} />
              <Chevron /><Gap $w={24} />
              <ChatIcon /><Gap $w={19} />
              <HelpIcon />
            </Anchored>
          </TabRow>
        </Header>

        <Ribbon>
          <Band $w={295}>
            <BandBody>
              <BigButton $w={108}>
                <BigIcon $dx={-7} $tall><PasteIcon /></BigIcon>
                <Text $ls={0.17}>Paste</Text>
                <PasteArrow><Chevron lift={0} /></PasteArrow>
              </BigButton>
              <Column $pl={6}>
                <CommandItem icon={<ScissorsIcon />} label="Cut" ls={-0.62} arrow={22} />
                <CommandItem icon={<CopyIcon />} label="Copy" ls={0.1} gap={13.5} arrow={19.5} />
                <CommandItem icon={<ClipboardIcon />} label="Format" ls={-0.45} gap={11} arrow={18} />
              </Column>
            </BandBody>
            <Footer title="Clipboard" ls={0.5} nudge={11} expander />
          </Band>

          <Band $w={620}>
            <BandBody>
              <Gallery>
                <GalleryCells>
                  <GalleryCell>
                    <GalleryIcon><ABig digit="0" /></GalleryIcon>
                    <Text $ls={0.25}>Style 0</Text>
                  </GalleryCell>
                  <GalleryCell $on>
                    <GalleryIcon><ABig digit="1" /></GalleryIcon>
                    <Text $ls={0.25}>Style 1</Text>
                  </GalleryCell>
                </GalleryCells>
                <GalleryScroll>
                  <ScrollButton><SmallArrow up color="#5d9b78" /></ScrollButton>
                  <ScrollButton><SmallArrow /></ScrollButton>
                  <ScrollButton><SmallArrow double /></ScrollButton>
                </GalleryScroll>
              </Gallery>
              <Column $pl={10}>
                <CommandItem icon={<ASmall />} label="Styles1" ls={-0.1} />
                <CommandItem icon={<PictureIcon />} label="Styles2" />
                <SelectorWrap>
                  <SelectorButton>
                    <WebDocIcon /><Gap $w={12} /><Text>Styles3</Text><Gap $w={19} /><Chevron color="#06243a" />
                  </SelectorButton>
                  <ColorPopup />
                </SelectorWrap>
              </Column>
            </BandBody>
            <Footer title="Quick Styles" nudge={2} />
          </Band>

          <Band $w={516}>
            <FontTools>
              <ToolLine>
                <FontCombo w={334} label="+ Minor (Calibri)" ls={-0.2} />
                <FontCombo w={114} label="11" />
              </ToolLine>
              <ToolLine>
                <Strip $w={96}>
                  <StripButton><IndentIcon /></StripButton>
                  <StripButton><IndentIcon right /></StripButton>
                </Strip>
                <Strip>
                  <StripButton><FontIcon /></StripButton>
                  <StripButton><FontIcon italic /></StripButton>
                  <StripButton><FontIcon light under /></StripButton>
                  <StripButton><FontIcon light strike /></StripButton>
                </Strip>
                <AlignStrip />
              </ToolLine>
            </FontTools>
            <Footer title="Font" ls={0.4} expander />
          </Band>

          <Band $w={812}>
            <BandBody>
              <Gap $w={5} />
              <BigButton $w={104}><BigIcon $dx={2} $top={4}><FolderIcon /></BigIcon><Text $ls={0.41}>Local</Text></BigButton>
              <BigButton $w={108}><BigIcon $dx={-6}><RemoteIcon /></BigIcon><Text>Remote</Text></BigButton>
              <BigButton $w={108}><BigIcon $dx={1} $top={4}><SavedIcon /></BigIcon><Text $ls={0.31}>Saved</Text></BigButton>
              <VLine />
              <Column $w={275} $pl={15}>
                <CommandItem icon={<NewDocIcon />} label="New document" ls={0.19} />
                <CommandItem icon={<OpenDocIcon />} label="Open document" ls={0.13} />
                <CommandItem icon={<SaveDocIcon />} label="Save document" ls={0.02} />
              </Column>
              <Column>
                <CommandItem icon={<PrinterIcon />} label="Print" ls={0.2} />
                <CommandItem icon={<PreviewIcon />} label="Print Preview" ls={-0.11} />
                <CommandItem icon={<WrenchDocIcon />} label="Properties" ls={-0.17} />
              </Column>
            </BandBody>
            <Footer title="Document" nudge={5} expander />
          </Band>

          <Band $w={336}>
            <BandBody>
              <BigButton $w={130}><BigIcon><SearchIcon /></BigIcon><Text $ls={-0.24}>Search</Text></BigButton>
              <Column $pl={3}>
                <CommandItem icon={<FindIcon />} label="Find" />
                <CommandItem icon={<ReplaceIcon />} label="Find replace" ls={0.13} disabled />
                <CommandItem icon={<SelectAllIcon />} label="Select all" />
              </Column>
            </BandBody>
            <Footer title="Find (toggle)" nudge={-6} />
          </Band>
        </Ribbon>

        <Main>
          <Editor>
            <HRuler>{rulerCells(106, false)}</HRuler>
            <Page>
              <VRuler>{rulerCells(24, true)}</VRuler>
              <Paragraph>
                <Text $ls={0.3}>Lorem ipsum dolor sit amet, consectetur adipiscing elit, sed do eiusmod tempor incididunt ut labore et dolore magna aliqua. Ut enim ad minim veniam, quis nostrud</Text>
                <Text $ls={0.19}>exercitation ullamco laboris nisi ut aliquip ex ea commodo consequat. Duis aute irure dolor in reprehenderit in voluptate velit esse cillum dolore eu fugiat nulla</Text>
                <Text $ls={0.31}>pariatur. Excepteur sint occaecat cupidatat non proident, sunt in culpa qui officia deserunt mollit anim id est laborum.</Text>
              </Paragraph>
            </Page>
          </Editor>
          <Form>
            <FormLabel $ls={-0.31}>Group 1</FormLabel><Check label="visible" ls={0.6} />
            <FormLabel $ls={-0.31}>Group 2</FormLabel><Check label="visible" ls={0.6} />
            <FormLabel>Skin</FormLabel><FontCombo w={318} label="Green Magic" ls={-0.13} />
            <FormLabel $ls={0.28}>App menu</FormLabel><Check on label="visible" ls={0.6} />
            <FormLabel $ls={0.1}>Taskbar</FormLabel><Check on label="full" />
            <FormLabel $ls={-0.12}>Change 'Paragraph'</FormLabel><PushButton $w={318}><Text $ls={-0.17}>change</Text></PushButton>
            <FormLabel $ls={0.1}>Locale</FormLabel><FontCombo w={318} label="English" />
            <FormLabel $ls={0.1}>Update gallery</FormLabel><PushButton $w={318}><Text>update</Text></PushButton>
          </Form>
        </Main>

        <StatusBar>
          <Text>Focus owner:</Text><Gap $w={16} />
          <WebDocIcon /><Gap $w={7} />
          <Text $ls={-0.06}>[JColorSelectorCommandButton] Styles3</Text>
          <Spacer />
          <Text $ls={0.37}>Right click to show menu</Text><Gap $w={14} />
          <AlignStrip />
        </StatusBar>
      </Window>
      <Defs />
    </Desktop>
  );
}
